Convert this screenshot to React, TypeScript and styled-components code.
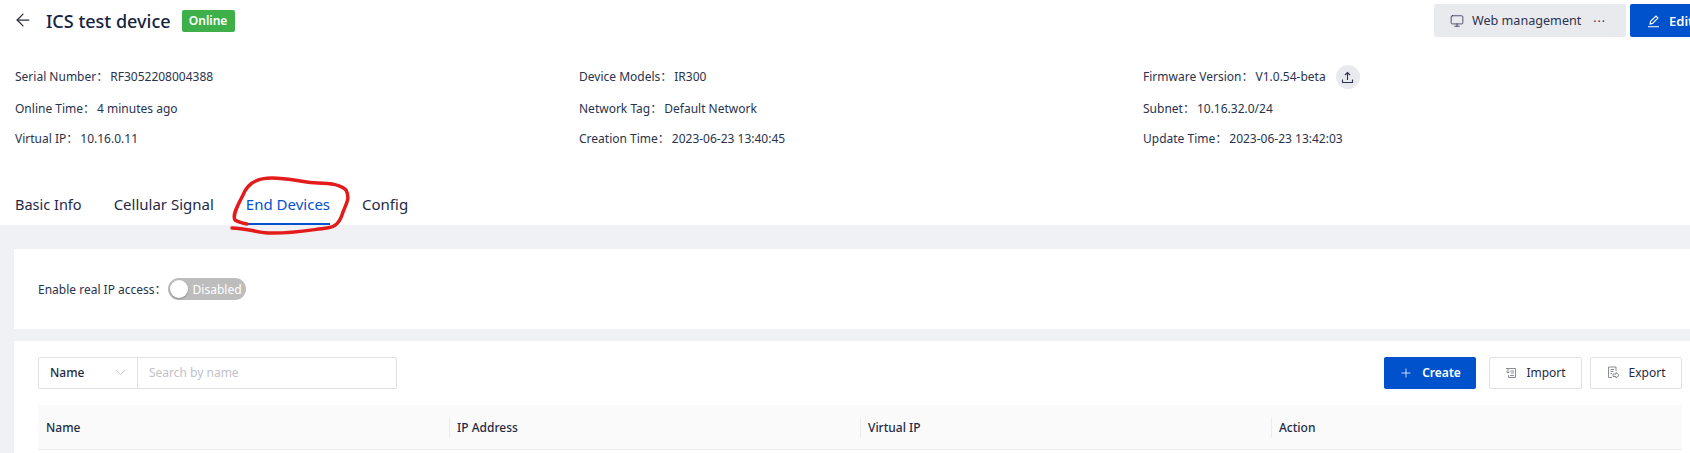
import React from "react";
import styled, { createGlobalStyle } from "styled-components";
import { ArrowLeft, ChevronDown, Monitor, Plus } from "lucide-react";

const GlobalStyle = createGlobalStyle`
  html, body {
    margin: 0;
    padding: 0;
    width: 1690px;
    height: 453px;
    overflow: hidden;
    background: #fff;
  }
  * { box-sizing: border-box; }
`;

const Page = styled.div`
  position: relative;
  width: 1690px;
  height: 453px;
  overflow: hidden;
  font-family: "Noto Sans", "Noto Sans CJK SC", sans-serif;
  font-size: 12px;
  color: #1f2a44;
`;

const Top = styled.div`
  height: 225px;
  padding: 4px 0 0 15px;
  display: flex;
  flex-direction: column;
`;

const TitleRow = styled.div`
  display: flex;
  align-items: center;
  height: 33px;
`;

const BackButton = styled.span`
  display: flex;
  width: 31px;
  margin: -2px 0 0 -2px;
  color: #2a2f3c;
`;

const Title = styled.h1`
  margin: 0 11px 0 2px;
  font-size: 18px;
  font-weight: 500;
  line-height: 32px;
  color: #14233f;
`;

const Badge = styled.span`
  width: 53px;
  height: 22px;
  background: #3eb049;
  border-radius: 2px;
  color: #fff;
  font-size: 12px;
  font-weight: 600;
  line-height: 22px;
  text-align: center;
`;

const Actions = styled.div`
  display: flex;
  flex-shrink: 0;
  gap: 4px;
  margin-left: auto;
  margin-right: -33px;
`;

const GreyButton = styled.div`
  display: flex;
  align-items: center;
  width: 192px;
  height: 33px;
  padding: 0 20px 0 16px;
  background: #e9eaee;
  border-radius: 2px;
  font-size: 12.6px;
  color: #2b3350;
  svg { margin-right: 8px; }
`;

const Dots = styled.span`
  margin-left: auto;
  letter-spacing: 1px;
  font-size: 12px;
  line-height: 12px;
  padding-bottom: 6px;
`;

const EditButton = styled.div`
  display: flex;
  align-items: center;
  gap: 9px;
  width: 93px;
  height: 33px;
  padding-left: 17px;
  background: #0052cc;
  border-radius: 2px 0 0 2px;
  color: #fff;
  font-size: 13px;
  font-weight: 600;
`;

const InfoGrid = styled.div`
  display: grid;
  grid-template-columns: 564px 564px 1fr;
  grid-auto-rows: auto;
  margin-top: 25px;
`;

const InfoItem = styled.div<{ $height: number }>`
  display: flex;
  align-items: center;
  height: ${(p) => p.$height}px;
  line-height: 16px;
  color: #29334d;
`;

const InfoValue = styled.span`
  margin-left: 2px;
`;

const RoundButton = styled.span`
  display: flex;
  align-items: center;
  justify-content: center;
  width: 24px;
  height: 24px;
  margin-left: 10px;
  border-radius: 50%;
  background: #e9eaee;
  color: #2b3350;
`;

const Tabs = styled.div`
  display: flex;
  gap: 32px;
  margin-top: auto;
  height: 40px;
`;

const Tab = styled.div<{ $active?: boolean }>`
  height: 40px;
  padding-top: 9px;
  font-size: 15px;
  line-height: 20px;
  color: ${(p) => (p.$active ? "#0052cc" : "#1f2a44")};
  border-bottom: 2px solid ${(p) => (p.$active ? "#0052cc" : "transparent")};
  margin-bottom: -1px;
  &:first-child { font-size: 14.5px; }
`;

const Body = styled.div`
  height: 228px;
  padding: 24px 0 0 14px;
  background: #f0f1f5;
  display: flex;
  flex-direction: column;
  gap: 12px;
`;

const ToggleCard = styled.div`
  display: flex;
  align-items: center;
  height: 80px;
  padding-left: 24px;
  background: #fff;
`;

const ToggleLabel = styled.span`
  color: #29334d;
`;

const Toggle = styled.div`
  display: flex;
  align-items: center;
  width: 78px;
  height: 22px;
  padding: 0 2px;
  margin-left: 1px;
  background: #bdbdbd;
  border-radius: 11px;
  color: #fff;
  font-size: 12px;
`;

const Knob = styled.span`
  width: 18px;
  height: 18px;
  margin-right: 5px;
  background: #fff;
  border-radius: 50%;
  box-shadow: 0 1px 2px rgba(0, 0, 0, 0.25);
`;

const TableCard = styled.div`
  flex: 1;
  padding: 15px 8px 0 24px;
  background: #fff;
`;

const Toolbar = styled.div`
  display: flex;
  align-items: center;
  height: 33px;
`;

const SearchGroup = styled.div`
  display: flex;
  width: 359px;
  height: 32px;
  border: 1px solid #dfe1e6;
  border-radius: 2px;
`;

const SelectBox = styled.div`
  display: flex;
  align-items: center;
  justify-content: space-between;
  width: 99px;
  padding: 0 8px 0 11px;
  border-right: 1px solid #dfe1e6;
  color: #1f2a44;
  font-weight: 500;
  svg { color: #a9adb8; }
`;

const SearchText = styled.span`
  align-self: center;
  padding-left: 11px;
  color: #bfc2c9;
`;

const ToolActions = styled.div`
  display: flex;
  align-items: center;
  margin-left: auto;
`;

const PrimaryButton = styled.div`
  display: flex;
  align-items: center;
  justify-content: center;
  gap: 9px;
  width: 92px;
  height: 32px;
  margin-right: 5px;
  background: #0052cc;
  border-radius: 2px;
  color: #fff;
  font-weight: 600;
`;

const OutlineButton = styled.div<{ $width: number }>`
  display: flex;
  align-items: center;
  justify-content: center;
  gap: 9px;
  width: ${(p) => p.$width}px;
  height: 32px;
  margin-left: 8px;
  border: 1px solid #dfe1e6;
  border-radius: 2px;
  color: #1f2a44;
  svg { color: #7d8088; }
`;

const TableHead = styled.div`
  display: grid;
  grid-template-columns: repeat(4, 1fr);
  height: 45px;
  margin-top: 16px;
  background: #fafafa;
  border-bottom: 1px solid #eaebee;
`;

const HeadCell = styled.div`
  position: relative;
  display: flex;
  align-items: center;
  padding-left: 8px;
  font-weight: 500;
  color: #1f2a44;
  &:not(:first-child)::before {
    content: "";
    position: absolute;
    left: 0;
    top: 12px;
    height: 21px;
    width: 1px;
    background: #ececec;
  }
`;

const Scribble = styled.svg`
  position: absolute;
  left: 225px;
  top: 170px;
  pointer-events: none;
`;

const UploadIcon = () => (
  <svg width="13" height="13" viewBox="0 0 13 13" fill="none" stroke="currentColor" strokeWidth="1.1">
    <path d="M6.5 9V1.5M4 4l2.5-2.5L9 4M1.5 8.5v3h10v-3" />
  </svg>
);

const PenIcon = () => (
  <svg width="13" height="14" viewBox="0 0 13 14" fill="none" stroke="currentColor" strokeWidth="1.1">
    <path d="M3 10l.6-2.6L9 2l2 2-5.4 5.4L3 10zM1 12.8h11" />
  </svg>
);

const ImportIcon = () => (
  <svg width="12" height="12" viewBox="0 0 12 12" fill="none" stroke="currentColor" strokeWidth="0.9">
    <path d="M1 1.5h9.5v9H3.5V8" />
    <path d="M3 2v4M1.3 4.5 3 6.2l1.7-1.7" />
    <path d="M5.5 4h3.5M6 6h3M5 8.5h4" />
  </svg>
);

const ExportIcon = () => (
  <svg width="13" height="13" viewBox="0 0 13 13" fill="none" stroke="currentColor" strokeWidth="0.9">
    <path d="M9 5V1H1.5v10.5H5" />
    <path d="M3.5 3.5h3.5M3.5 5.5h3M3.5 7.5h1.5" />
    <path d="M6 10.5V8h3V6.3l3 2.9-3 2.8V10.5H6z" />
  </svg>
);

const infoRows = [
  [
    ["Serial Number", "RF3052208004388"],
    ["Device Models", "IR300"],
    ["Firmware Version", "V1.0.54-beta"],
  ],
  [
    ["Online Time", "4 minutes ago"],
    ["Network Tag", "Default Network"],
    ["Subnet", "10.16.32.0/24"],
  ],
  [
    ["Virtual IP", "10.16.0.11"],
    ["Creation Time", "2023-06-23 13:40:45"],
    ["Update Time", "2023-06-23 13:42:03"],
  ],
];

const rowHeights = [30, 33, 27];

const tabs = ["Basic Info", "Cellular Signal", "End Devices", "Config"];
const columns = ["Name", "IP Address", "Virtual IP", "Action"];

const App = () => {
  return (
    <Page>
      <GlobalStyle />
      <Top>
        <TitleRow>
          <BackButton>
            <ArrowLeft size={20} strokeWidth={1.5} />
          </BackButton>
          <Title>ICS test device</Title>
          <Badge>Online</Badge>
          <Actions>
            <GreyButton>
              <Monitor size={14} strokeWidth={1.4} />
              Web management
              <Dots>...</Dots>
            </GreyButton>
            <EditButton>
              <PenIcon />
              Edit
            </EditButton>
          </Actions>
        </TitleRow>

        <InfoGrid>
          {infoRows.map((row, r) =>
            row.map(([label, value]) => (
              <InfoItem key={label} $height={rowHeights[r]}>
                {label}：<InfoValue>{value}</InfoValue>
                {label === "Firmware Version" && (
                  <RoundButton>
                    <UploadIcon />
                  </RoundButton>
                )}
              </InfoItem>
            ))
          )}
        </InfoGrid>

        <Tabs>
          {tabs.map((t) => (
            <Tab key={t} $active={t === "End Devices"}>
              {t}
            </Tab>
          ))}
        </Tabs>
      </Top>

      <Body>
        <ToggleCard>
          <ToggleLabel>Enable real IP access：</ToggleLabel>
          <Toggle>
            <Knob />
            Disabled
          </Toggle>
        </ToggleCard>

        <TableCard>
          <Toolbar>
            <SearchGroup>
              <SelectBox>
                Name
                <ChevronDown size={17} strokeWidth={1} />
              </SelectBox>
              <SearchText>Search by name</SearchText>
            </SearchGroup>
            <ToolActions>
              <PrimaryButton>
                <Plus size={14} strokeWidth={1.3} />
                Create
              </PrimaryButton>
              <OutlineButton $width={93}>
                <ImportIcon />
                Import
              </OutlineButton>
              <OutlineButton $width={92}>
                <ExportIcon />
                Export
              </OutlineButton>
            </ToolActions>
          </Toolbar>
          <TableHead>
            {columns.map((c) => (
              <HeadCell key={c}>{c}</HeadCell>
            ))}
          </TableHead>
        </TableCard>
      </Body>

      <Scribble width="130" height="70" viewBox="225 170 130 70">
        <path
          d="M232 228 C245 228 255 232 268 233 C290 234 310 230 327 228 C336 227 340 222 343 212 C347 202 350 198 346 190 C340 184 330 183 318 183 C305 183 290 178 272 178 C258 178 248 182 243 195 C238 205 232 215 235 220 C238 222 242 223 247 224"
          fill="none"
          stroke="#e31b1b"
          strokeWidth="3.5"
          strokeLinecap="round"
        />
      </Scribble>
    </Page>
  );
};

export default App;
